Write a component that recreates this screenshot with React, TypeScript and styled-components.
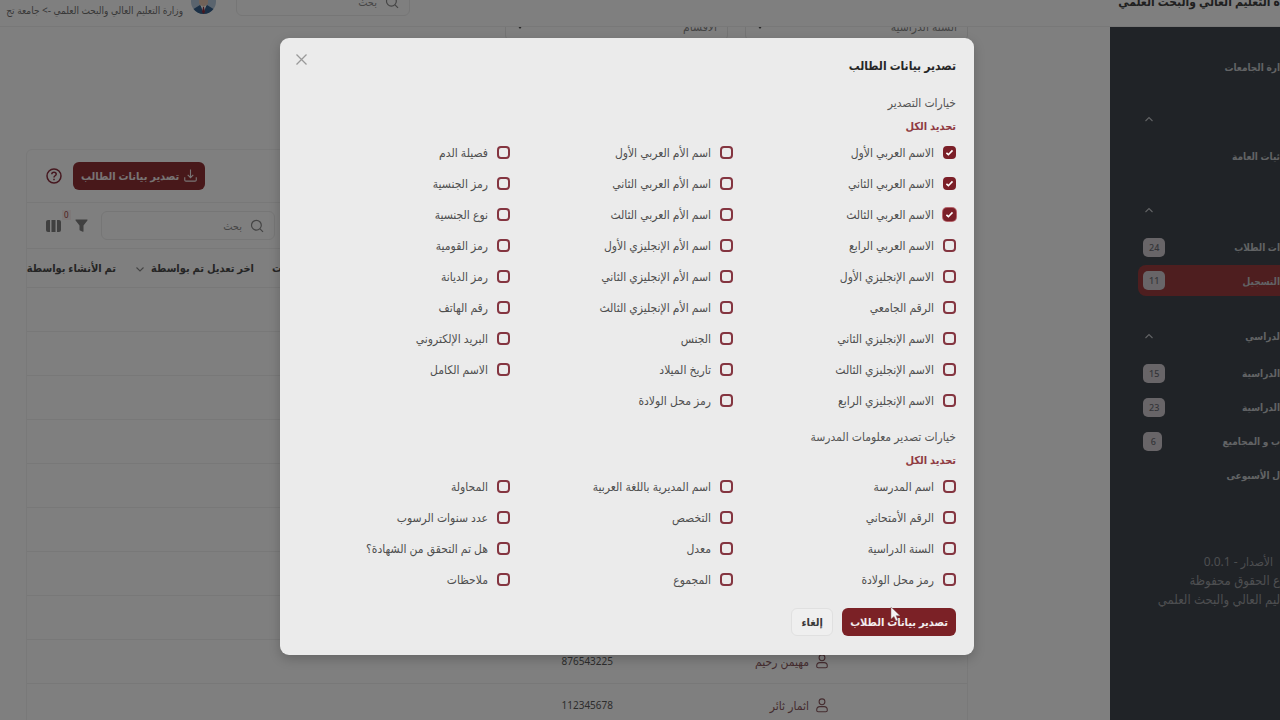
import React from "react";
import styled, { createGlobalStyle, css } from "styled-components";

const GlobalStyle = createGlobalStyle`
  * { box-sizing: border-box; }
  body {
    margin: 0;
    background: #ffffff;
    overflow: hidden;
    font-family: "Noto Sans", "DejaVu Sans Condensed", "DejaVu Sans", sans-serif;
    font-size: 12px;
    color: #4a4a4a;
  }
  button, input, select { font-family: inherit; }
  a { color: inherit; text-decoration: none; }
`;

const Page = styled.div`
  display: flex;
  flex-direction: column;
  height: 100vh;
  overflow: hidden;
`;

const TopBar = styled.header`
  display: flex;
  align-items: flex-end;
  justify-content: space-between;
  flex: none;
  height: 27px;
  border-bottom: 1px solid #f0f0f0;
  overflow: hidden;
`;

const Brand = styled.strong`
  font-size: 12px;
  line-height: 20px;
  padding-bottom: 14px;
  color: #404040;
  white-space: nowrap;
`;

const TopTools = styled.div`
  display: flex;
  align-items: flex-end;
  gap: 20px;
`;

const SearchBox = styled.label`
  display: flex;
  align-items: center;
  gap: 8px;
  width: 174px;
  height: 29px;
  padding: 0 10px;
  border: 1px solid #ececec;
  border-radius: 6px;
  color: #8a8a8a;
  input {
    flex: 1;
    min-width: 0;
    border: 0;
    padding: 0;
    background: none;
    font-size: 11px;
    outline: none;
  }
  input::placeholder { color: #8c8c8c; opacity: 1; }
`;

const TopSearch = styled.div`
  padding-bottom: 10px;
`;

const Account = styled.div`
  display: flex;
  align-items: flex-end;
  gap: 8px;
  width: 216px;
  padding-bottom: 8px;
`;

const Avatar = styled.svg`
  flex: none;
  margin-bottom: 4px;
`;

const AccountText = styled.div`
  display: flex;
  flex-direction: column;
  flex: 1;
  min-width: 0;
  overflow: hidden;
  white-space: nowrap;
  font-size: 10px;
  line-height: 16px;
  color: #707070;
`;

const Body = styled.div`
  display: flex;
  flex: 1;
  min-height: 0;
`;

const Sidebar = styled.aside`
  display: flex;
  flex-direction: column;
  flex: none;
  width: 170px;
  padding-top: 23px;
  background: #40464e;
  overflow: hidden;
`;

const NavGroup = styled.nav<{ $gap: number }>`
  display: flex;
  flex-direction: column;
  margin-top: ${(p) => p.$gap}px;
`;

const NavHead = styled.button`
  display: flex;
  align-items: center;
  justify-content: space-between;
  height: 34px;
  margin-bottom: 3px;
  padding: 0 0 0 34px;
  border: 0;
  background: none;
  color: #c4c6ca;
  font-size: 10px;
  font-weight: 700;
`;

const NavItem = styled.a<{ $active?: boolean }>`
  display: flex;
  align-items: center;
  justify-content: space-between;
  height: 34px;
  margin-left: 28px;
  padding-left: 5px;
  font-size: 10px;
  font-weight: 700;
  color: #c4c6ca;
  white-space: nowrap;
  ${(p) =>
    p.$active &&
    css`
      height: 31px;
      margin: 1px 28px 1px 0;
      margin: 1px 0 1px 28px;
      border-radius: 8px 0 0 8px;
      background: #9c3d3f;
    `}
`;

const Count = styled.span`
  min-width: 19px;
  padding: 0 6px;
  border-radius: 5px;
  background: #d0cad0;
  color: #6a6a72;
  font-size: 9px;
  font-weight: 500;
  line-height: 19px;
`;

const SideFooter = styled.footer`
  margin-top: 60px;
  font-size: 13px;
  line-height: 19px;
  color: #9b9da1;
  white-space: nowrap;
  p { margin: 0; }
  p:first-child { padding-right: 7px; font-size: 12px; }
`;

const Main = styled.main`
  display: flex;
  flex-direction: column;
  flex: 1;
  min-width: 0;
  padding: 0 142px 0 26px;
  overflow: hidden;
`;

const Filters = styled.div`
  display: flex;
  gap: 17px;
  flex: none;
  height: 122px;
  overflow: hidden;
`;

const Field = styled.label`
  display: flex;
  align-items: center;
  flex: none;
  width: 223px;
  height: 29px;
  margin-top: -15px;
  padding: 0 10px 0 11px;
  border: 1px solid #e8e8e8;
  border-radius: 6px;
  color: #505050;
  select {
    flex: 1;
    border: 0;
    background: none;
    appearance: none;
    font-size: 12px;
    color: #8a8a8a;
  }
`;

const Panel = styled.section`
  flex: none;
  border: 1px solid #f2f2f2;
  border-radius: 6px 6px 0 0;
`;

const PanelRow = styled.div<{ $h: number }>`
  display: flex;
  align-items: center;
  justify-content: flex-end;
  height: ${(p) => p.$h}px;
  padding-left: 19px;
  border-bottom: 1px solid #f0f0f0;
`;

const Spacer = styled.span<{ $w: number }>`
  flex: none;
  width: ${(p) => p.$w}px;
`;

const IconButton = styled.button<{ $color: string }>`
  position: relative;
  display: flex;
  padding: 0;
  border: 0;
  background: none;
  color: ${(p) => p.$color};
`;

const FilterCount = styled.span`
  position: absolute;
  top: -9px;
  left: -13px;
  padding: 0 2px;
  background: #fbf0f0;
  color: #9c3d3f;
  font-size: 8px;
  line-height: 10px;
`;

const Button = styled.button<{ $kind: "dim" | "primary" | "plain" }>`
  display: flex;
  align-items: center;
  justify-content: center;
  gap: 5px;
  min-width: 42px;
  height: 28px;
  padding: 0 7px 1px;
  border: 1px solid transparent;
  border-radius: 6px;
  font-size: 11px;
  font-weight: 700;
  white-space: nowrap;
  color: #f3eeee;
  background: #7b2126;
  ${(p) =>
    p.$kind === "dim" &&
    css`
      background: #903034;
      color: #f0e8e8;
    `}
  ${(p) =>
    p.$kind === "plain" &&
    css`
      background: #efefef;
      border-color: #e0e0e0;
      color: #3a3a3a;
    `}
`;

const Table = styled.table`
  width: 100%;
  table-layout: fixed;
  border-collapse: collapse;
  white-space: nowrap;
  th {
    height: 38px;
    padding: 0;
    font-size: 11px;
    font-weight: 700;
    text-align: right;
    color: #4a4a4a;
  }
  th svg { margin-right: 6px; vertical-align: middle; color: #888888; }
  th.end { padding-left: 18px; text-align: left; }
  td {
    height: 44px;
    padding: 0;
    border: solid #f0f0f0;
    border-width: 1px 0;
    font-size: 10px;
    color: #5a5a5a;
  }
`;

const Student = styled.a`
  display: flex;
  align-items: center;
  gap: 7px;
  font-size: 12px;
  color: #8a5a60;
`;

const Overlay = styled.div`
  position: absolute;
  inset: 0;
  padding: 38px 306px 20px 280px;
  background: rgba(0, 0, 0, 0.5);
`;

const Dialog = styled.section`
  display: flex;
  flex-direction: column;
  padding: 0 18px 19px 7px;
  border-radius: 9px;
  background: #ebebeb;
  box-shadow: 0 4px 12px rgba(0, 0, 0, 0.2);
`;

const DialogHead = styled.div`
  display: flex;
  justify-content: space-between;
  height: 54px;
  padding-left: 8px;
  h2 {
    margin: 0;
    font-size: 12px;
    line-height: 56px;
    color: #262626;
  }
  button { align-self: flex-start; margin-top: 15px; }
`;

const Group = styled.fieldset<{ $gap?: number }>`
  display: block;
  min-width: 0;
  margin: ${(p) => p.$gap || 0}px 0 0;
  padding: 0;
  border: 0;
  legend {
    padding: 0;
    font-size: 12px;
    line-height: 22px;
    color: #555555;
  }
`;

const SelectAll = styled.button`
  display: block;
  height: 23px;
  padding: 0;
  border: 0;
  background: none;
  color: #8f3a42;
  font-size: 11px;
  font-weight: 700;
`;

const Options = styled.div<{ $rows: number }>`
  display: grid;
  grid-auto-flow: column;
  grid-template-rows: repeat(${(p) => p.$rows}, 31px);
  grid-template-columns: repeat(3, 1fr);
`;

const Option = styled.label`
  display: flex;
  align-items: center;
  gap: 9px;
  font-size: 12px;
  line-height: 16px;
  color: #4f4f4f;
  white-space: nowrap;
`;

const Check = styled.input<{ $focus?: boolean }>`
  flex: none;
  width: 13px;
  height: 13px;
  margin: 0;
  appearance: none;
  border: 2px solid #843540;
  border-radius: 4px;
  &:checked {
    border-color: #7b1f28;
    background: #7b1f28
      url("data:image/svg+xml,%3Csvg xmlns='http://www.w3.org/2000/svg' viewBox='0 0 9 9'%3E%3Cpath d='M1.4 4.8l2 1.9 4.1-4.3' fill='none' stroke='%23fff' stroke-width='1.6'/%3E%3C/svg%3E")
      center / 9px 9px no-repeat;
  }
  ${(p) => p.$focus && css`box-shadow: 0 0 0 1px #b5676e;`}
`;

const Actions = styled.div`
  display: flex;
  gap: 9px;
  margin-top: 13px;
`;

const Pointer = styled.svg`
  position: absolute;
  left: 890px;
  top: 606px;
`;

const SearchIcon = () => (
  <svg width="14" height="14" viewBox="0 0 14 14" fill="none" stroke="currentColor" strokeWidth="1.2">
    <circle cx="6.4" cy="6.2" r="4.9" />
    <path d="M10 9.9l3 3" />
  </svg>
);

const Chevron = ({ down }: { down?: boolean }) => (
  <svg width="10" height="7" viewBox="0 0 10 7" fill="none" stroke="currentColor" strokeWidth="1.1">
    <path d={down ? "M1.5 1.5L5 5l3.5-3.5" : "M1.5 5L5 1.5 8.5 5"} />
  </svg>
);

const Caret = () => (
  <svg width="6" height="4" viewBox="0 0 6 4">
    <path d="M0 0h6L3 4z" fill="currentColor" />
  </svg>
);

const UserIcon = () => (
  <svg width="12" height="15" viewBox="0 0 12 15" fill="none" stroke="currentColor" strokeWidth="1.1">
    <circle cx="6" cy="3.8" r="2.9" />
    <path d="M3.9 8.600h4.200c1.900 0 3.200 1.500 3.200 3.300v.4c0 .9-.6 1.500-1.500 1.500H2.200c-.9 0-1.500-.6-1.500-1.500v-.4c0-1.800 1.300-3.300 3.200-3.300z" />
  </svg>
);

const studentOptions = [
  "الاسم العربي الأول", "الاسم العربي الثاني", "الاسم العربي الثالث", "الاسم العربي الرابع",
  "الاسم الإنجليزي الأول", "الرقم الجامعي", "الاسم الإنجليزي الثاني", "الاسم الإنجليزي الثالث",
  "الاسم الإنجليزي الرابع",
  "اسم الأم العربي الأول", "اسم الأم العربي الثاني", "اسم الأم العربي الثالث",
  "اسم الأم الإنجليزي الأول", "اسم الأم الإنجليزي الثاني", "اسم الأم الإنجليزي الثالث",
  "الجنس", "تاريخ الميلاد", "رمز محل الولادة",
  "فصيلة الدم", "رمز الجنسية", "نوع الجنسية", "رمز القومية", "رمز الديانة", "رقم الهاتف",
  "البريد الإلكتروني", "الاسم الكامل",
];

const schoolOptions = [
  "اسم المدرسة", "الرقم الأمتحاني", "السنة الدراسية", "رمز محل الولادة",
  "اسم المديرية باللغة العربية", "التخصص", "معدل", "المجموع",
  "المحاولة", "عدد سنوات الرسوب", "هل تم التحقق من الشهادة؟", "ملاحظات",
];

const students = [
  ...Array.from({ length: 8 }, () => ({ name: "", code: "" })),
  { name: "مهيمن رحيم", code: "876543225" },
  { name: "اثمار ثائر", code: "112345678" },
];

interface Link { text: string; count?: number; active?: boolean }
const navGroups: { gap: number; head?: string; links: Link[] }[] = [
  { gap: 0, links: [{ text: "ارة الجامعات" }] },
  { gap: 18, head: "", links: [{ text: "ئيات العامة" }] },
  { gap: 20, head: "", links: [{ text: "ات الطلاب", count: 24 }, { text: "التسجيل", count: 11, active: true }] },
  {
    gap: 22,
    head: "لدراسي",
    links: [
      { text: "الدراسية", count: 15 },
      { text: "الدراسية", count: 23 },
      { text: "ب و المجاميع", count: 6 },
      { text: "ل الأسبوعى" },
    ],
  },
];

export default function App() {
  return (
    <>
      <GlobalStyle />
      <Page dir="rtl">
        <TopBar>
          <Brand>ة التعليم العالي والبحث العلمي</Brand>
          <TopTools>
            <TopSearch>
              <SearchBox>
                <SearchIcon />
                <input placeholder="بحث" aria-label="بحث" />
              </SearchBox>
            </TopSearch>
            <Account>
              <Avatar width="25" height="25" viewBox="0 0 25 25">
                <circle cx="12.5" cy="12.5" r="12.5" fill="#b4c9dc" />
                <path d="M8 8h9v6l-2 4h-5l-2-4z" fill="#e2c4b0" />
                <path d="M2.5 20l6.500-4 3.500 4 3.500-4 6.500 4a12.500 12.500 0 0 1-20 0z" fill="#36608c" />
                <path d="M9.5 16l3 8 3-8-3 2z" fill="#ffffff" />
                <path d="M12 18h1l1 5-1.5 2-1.5-2z" fill="#903040" />
              </Avatar>
              <AccountText>
                <span>وزارة التعليم العالي والبحث العلمي -&gt; جامعة تج</span>
              </AccountText>
            </Account>
          </TopTools>
        </TopBar>

        <Body>
          <Sidebar>
            {navGroups.map((g, i) => (
              <NavGroup key={i} $gap={g.gap}>
                {g.head !== undefined && (
                  <NavHead type="button" aria-expanded="true">
                    <span>{g.head}</span>
                    <Chevron />
                  </NavHead>
                )}
                {g.links.map((l, n) => (
                  <NavItem key={n} href="#" $active={l.active}>
                    <span>{l.text}</span>
                    {l.count && <Count>{l.count}</Count>}
                  </NavItem>
                ))}
              </NavGroup>
            ))}
            <SideFooter>
              <p>الأصدار - 0.0.1</p>
              <p>ع الحقوق محفوظة</p>
              <p>ليم العالي والبحث العلمي</p>
            </SideFooter>
          </Sidebar>

          <Main>
            <Filters>
              {["السنة الدراسية", "الاقسام"].map((t) => (
                <Field key={t}>
                  <select aria-label={t}>
                    <option>{t}</option>
                  </select>
                  <Caret />
                </Field>
              ))}
            </Filters>

            <Panel>
              <PanelRow $h={53}>
                <Button type="button" $kind="dim">
                  <svg width="13" height="13" viewBox="0 0 14 14" fill="none" stroke="currentColor" strokeWidth="1.2">
                    <path d="M7 .5v8.500M4 6.300l3 3 3-3M.8 9v2.800c0 .8.500 1.300 1.300 1.300h9.800c.8 0 1.300-.5 1.300-1.300V9" />
                  </svg>
                  تصدير بيانات الطالب
                </Button>
                <Spacer $w={11} />
                <IconButton type="button" $color="#8c3140" aria-label="مساعدة">
                  <svg width="16" height="16" viewBox="0 0 16 16" fill="none" stroke="currentColor" strokeWidth="1.5">
                    <circle cx="8" cy="8" r="7" />
                    <path d="M5.8 6.300c0-1.300 1-2.100 2.200-2.100s2.200.8 2.200 2c0 1.500-2.200 1.600-2.200 3.200M8 10.700v1.500" />
                  </svg>
                </IconButton>
              </PanelRow>
              <PanelRow $h={46}>
                <SearchBox>
                  <SearchIcon />
                  <input placeholder="بحث" aria-label="بحث في الجدول" />
                </SearchBox>
                <Spacer $w={13} />
                <IconButton type="button" $color="#808080" aria-label="تصفية">
                  <svg width="13" height="14" viewBox="0 0 13 14" fill="currentColor">
                    <path d="M1 .5h11c.5 0 .7.600.4 1L8.500 6.500v5.700c0 .5-.4.700-.8.500L5 11.500c-.3-.1-.5-.4-.5-.8V6.500L.600 1.500C.3 1.100.5.500 1 .500z" />
                  </svg>
                  <FilterCount>0</FilterCount>
                </IconButton>
                <Spacer $w={14} />
                <IconButton type="button" $color="#808080" aria-label="الأعمدة">
                  <svg width="15" height="12" viewBox="0 0 15 12" fill="currentColor">
                    <path d="M2 0h2v12H2a2 2 0 0 1-2-2V2a2 2 0 0 1 2-2z" />
                    <rect x="5.5" width="4" height="12" />
                    <path d="M11 0h2a2 2 0 0 1 2 2v8a2 2 0 0 1-2 2h-2z" />
                  </svg>
                </IconButton>
              </PanelRow>
              <Table>
                <colgroup>
                  <col width="139" />
                  <col width="215" />
                  <col />
                  <col width="129" />
                  <col width="138" />
                  <col width="89" />
                </colgroup>
                <thead>
                  <tr>
                    <th />
                    <th />
                    <th />
                    <th className="end">عدد الطلبات</th>
                    <th>
                      اخر تعديل تم بواسطة
                      <Chevron down />
                    </th>
                    <th>تم الأنشاء بواسطة</th>
                  </tr>
                </thead>
                <tbody>
                  {students.map((s, i) => (
                    <tr key={i}>
                      <td />
                      <td>
                        {s.name && (
                          <Student href="#">
                            <UserIcon />
                            {s.name}
                          </Student>
                        )}
                      </td>
                      <td>{s.code}</td>
                      <td />
                      <td />
                      <td />
                    </tr>
                  ))}
                </tbody>
              </Table>
            </Panel>
          </Main>
        </Body>

        <Overlay>
          <Dialog role="dialog" aria-modal="true" aria-labelledby="export-title">
            <DialogHead>
              <h2 id="export-title">تصدير بيانات الطالب</h2>
              <IconButton type="button" $color="#999999" aria-label="إغلاق">
                <svg width="13" height="13" viewBox="0 0 13 13" fill="none" stroke="currentColor" strokeWidth="1.3">
                  <path d="M1.5 1.500l10 10M11.500 1.500l-10 10" />
                </svg>
              </IconButton>
            </DialogHead>
            <Group>
              <legend>خيارات التصدير</legend>
              <SelectAll type="button">تحديد الكل</SelectAll>
              <Options $rows={9}>
                {studentOptions.map((t, i) => (
                  <Option key={t}>
                    <Check type="checkbox" defaultChecked={i < 3} $focus={i === 2} />
                    {t}
                  </Option>
                ))}
              </Options>
            </Group>
            <Group $gap={10}>
              <legend>خيارات تصدير معلومات المدرسة</legend>
              <SelectAll type="button">تحديد الكل</SelectAll>
              <Options $rows={4}>
                {schoolOptions.map((t) => (
                  <Option key={t}>
                    <Check type="checkbox" />
                    {t}
                  </Option>
                ))}
              </Options>
            </Group>
            <Actions>
              <Button type="button" $kind="primary">تصدير بيانات الطلاب</Button>
              <Button type="button" $kind="plain">إلغاء</Button>
            </Actions>
          </Dialog>
          <Pointer width="11" height="16" viewBox="0 0 11 16">
            <path d="M1 1v12l3-2.500 2 4.500 2-1-2-4.300h4z" fill="#f4f4f4" stroke="#8a6a6a" strokeWidth=".5" />
          </Pointer>
        </Overlay>
      </Page>
    </>
  );
}
